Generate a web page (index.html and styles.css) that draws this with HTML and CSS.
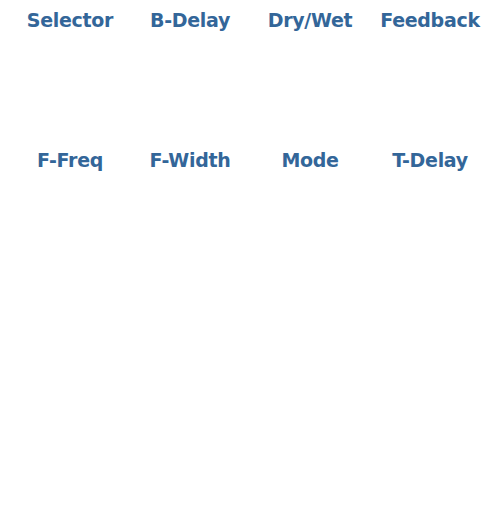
FILE: index.html
```html
<!DOCTYPE html>
<html>
<head>
<meta charset="utf-8">
<link rel="stylesheet" href="styles.css">
</head>
<body>
<div class="grid">
  <div class="cell"><span class="label">Selector</span></div>
  <div class="cell"><span class="label">B-Delay</span></div>
  <div class="cell"><span class="label">Dry/Wet</span></div>
  <div class="cell"><span class="label">Feedback</span></div>
  <div class="cell"><span class="label">F-Freq</span></div>
  <div class="cell"><span class="label">F-Width</span></div>
  <div class="cell"><span class="label">Mode</span></div>
  <div class="cell"><span class="label">T-Delay</span></div>
</div>
</body>
</html>
```
FILE: styles.css
```css
html, body {
  margin: 0;
  padding: 0;
  background: #ffffff;
}
.grid {
  display: grid;
  grid-template-columns: repeat(4, 120px);
  grid-auto-rows: 140px;
  padding: 0 10px;
}
.cell {
  display: flex;
  justify-content: center;
  align-items: flex-start;
  padding-top: 7px;
}
.label {
  font-family: "DejaVu Sans", sans-serif;
  font-weight: bold;
  font-size: 19px;
  line-height: 26px;
  letter-spacing: -0.3px;
  color: #336699;
}
```
